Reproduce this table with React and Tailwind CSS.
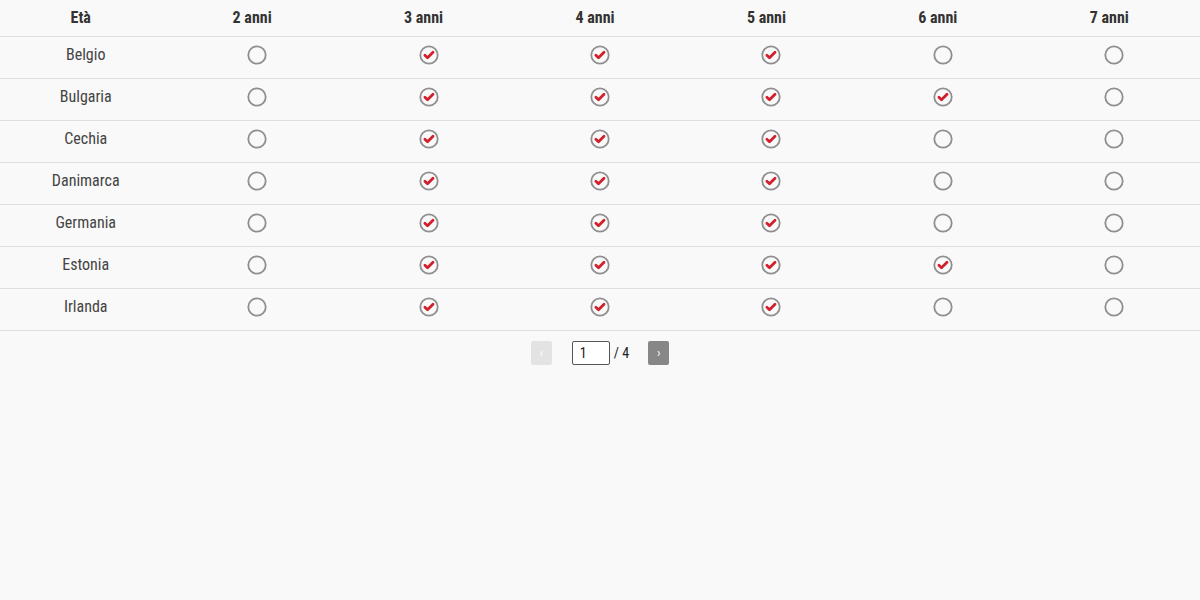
import React from "react";

const cols = ["2 anni", "3 anni", "4 anni", "5 anni", "6 anni", "7 anni"];
const rows = [
  ["Belgio", [0, 1, 1, 1, 0, 0]],
  ["Bulgaria", [0, 1, 1, 1, 1, 0]],
  ["Cechia", [0, 1, 1, 1, 0, 0]],
  ["Danimarca", [0, 1, 1, 1, 0, 0]],
  ["Germania", [0, 1, 1, 1, 0, 0]],
  ["Estonia", [0, 1, 1, 1, 1, 0]],
  ["Irlanda", [0, 1, 1, 1, 0, 0]],
];

function Mark({ on }) {
  return (
    <svg width="20" height="20" viewBox="0 0 20 20">
      <circle cx="10" cy="10" r="8.7" fill="none" stroke="#8f8f8f" strokeWidth="1.8" />
      {on ? (
        <path d="M5.9 10.3 L8.5 12.8 L14 7.3" fill="none" stroke="#d21f2b" strokeWidth="2.8" strokeLinecap="round" strokeLinejoin="round" />
      ) : null}
    </svg>
  );
}

export default function App() {
  return (
    <div
      className="w-[1200px] h-[600px] bg-[#f9f9f9] text-[#333]"
      style={{ fontFamily: '"Roboto Condensed", Roboto, "Liberation Sans Narrow", sans-serif', fontStretch: "condensed" }}
    >
      <div className="grid grid-cols-7 h-[37px] border-b border-[#dedede] items-center">
        <div className="text-center font-bold text-[16px] pb-[1px] pr-[10px]">Età</div>
        {cols.map((c) => (
          <div key={c} className="text-center font-bold text-[16px] pb-[1px] pr-[10px]">{c}</div>
        ))}
      </div>
      {rows.map(([name, vals]) => (
        <div key={name} className="grid grid-cols-7 h-[42px] border-b border-[#dedede] items-center">
          <div className="text-center text-[16px] text-[#444] pb-[6px]">{name}</div>
          {vals.map((v, i) => (
            <div key={i} className="flex justify-center pb-[6px]">
              <Mark on={!!v} />
            </div>
          ))}
        </div>
      ))}
      <div className="flex justify-center items-center pt-[10px] text-[14px] text-[#222]">
        <div className="w-[21px] h-[24px] bg-[#e3e3e3] rounded-[2px] flex items-center justify-center text-white text-[13px]">‹</div>
        <div className="ml-[20px] w-[38px] h-[24px] border border-[#555] rounded-[2px] bg-white flex items-center pl-[7px]">1</div>
        <div className="ml-[4px]">/ 4</div>
        <div className="ml-[19px] w-[21px] h-[24px] bg-[#878787] rounded-[2px] flex items-center justify-center text-white text-[13px]">›</div>
      </div>
    </div>
  );
}
